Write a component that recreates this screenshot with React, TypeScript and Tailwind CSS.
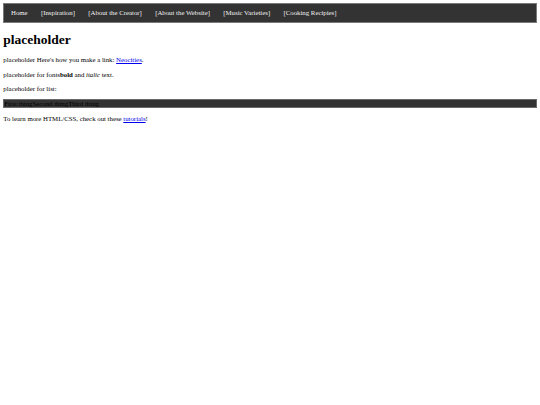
import React from "react";

export default function App() {
  const nav = ["Home", "[Inspiration]", "[About the Creator]", "[About the Website]", "[Music Varieties]", "[Cooking Recipies]"];
  return (
    <div className="min-h-[405px] bg-white p-[3.33px] font-['Liberation_Serif','Times_New_Roman',serif] text-[6.8px] leading-[1.15] text-black">
      <ul className="flex h-[19.5px] items-stretch border border-[#7a7a7a] bg-[#333333]">
        {nav.map((n) => (
          <li key={n} className="flex">
            <a href="#" className="flex items-center px-[6.67px] text-[#f2f2f2] no-underline">
              {n}
            </a>
          </li>
        ))}
      </ul>
      <h1 className="my-[8.9px] text-[13.5px] font-bold">placeholder</h1>
      <p className="my-[6.6px]">
        placeholder Here's how you make a link:{" "}
        <a href="#" className="text-[#0000ee] underline">Neocities</a>.
      </p>
      <p className="my-[6.6px]">
        placeholder for fonts<b className="font-bold">bold</b> and <i className="italic">italic</i> text.
      </p>
      <p className="my-[6.6px]">placeholder for list:</p>
      <ul className="my-[6.4px] h-[9px] border border-[#6a6a6a] bg-[#333333] leading-[7px]">
        <li className="inline">First thing</li>
        <li className="inline">Second thing</li>
        <li className="inline">Third thing</li>
      </ul>
      <p className="my-[6px]">
        To learn more HTML/CSS, check out these{" "}
        <a href="#" className="text-[#0000ee] underline">tutorials</a>!
      </p>
    </div>
  );
}
